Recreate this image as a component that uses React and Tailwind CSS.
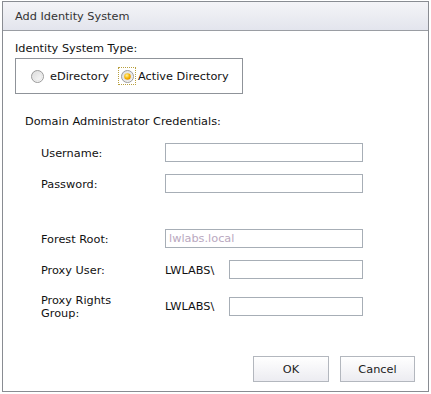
import React from "react";

function Radio({ checked }) {
  return (
    <svg width="13" height="13" viewBox="0 0 13 13" className="shrink-0">
      <defs>
        <linearGradient id={checked ? "rgc" : "rgu"} x1="0" y1="0" x2="1" y2="1">
          <stop offset="0" stopColor="#d8d8d8" />
          <stop offset="1" stopColor="#ffffff" />
        </linearGradient>
        <radialGradient id="dot" cx="0.4" cy="0.35" r="0.7">
          <stop offset="0" stopColor="#fff3a0" />
          <stop offset="0.6" stopColor="#f6b400" />
          <stop offset="1" stopColor="#e08a00" />
        </radialGradient>
      </defs>
      <circle cx="6.5" cy="6.5" r="6" fill={`url(#${checked ? "rgc" : "rgu"})`} stroke="#9a9a9a" strokeWidth="1" />
      <circle cx="6.5" cy="6.5" r="4.3" fill="none" stroke="#e6e6e6" strokeWidth="1" />
      {checked && <circle cx="6.5" cy="6.5" r="3.3" fill="url(#dot)" />}
    </svg>
  );
}

function Input({ className = "", placeholder }) {
  return (
    <div className={`h-[19px] border border-[#a7aeb6] bg-white flex items-center px-[3px] ${className}`}>
      {placeholder && <span className="text-[#b9a8c0] leading-[13px]">{placeholder}</span>}
    </div>
  );
}

export default function App() {
  return (
    <div className="w-[431px] h-[394px] bg-white pt-[1px] pl-[2px]" style={{ fontFamily: '"DejaVu Sans", Verdana, sans-serif' }}>
      <div className="w-[427px] h-[391px] border border-[#898c92] flex flex-col text-[11.3px] text-[#111] leading-[13px]">
        <div className="h-[29px] shrink-0 border-b border-[#9a9da3] bg-gradient-to-b from-[#f4f4f7] to-[#e3e5ed] flex items-center pl-[12px] pt-[1px] text-[#333]">
          Add Identity System
        </div>
        <div className="flex flex-col pl-[12px] pr-[13px] flex-1">
          <div className="mt-[11px]">Identity System Type:</div>
          <div className="mt-[3px] w-[228px] h-[36px] border border-[#8f9399] flex items-center pl-[15px]">
            <Radio checked={false} />
            <span className="ml-[6px]">eDirectory</span>
            <div className="ml-[9px] w-[18px] h-[18px] border border-dotted border-[#b8a040] flex items-center justify-center">
              <Radio checked />
            </div>
            <span className="ml-[2px]">Active Directory</span>
          </div>
          <div className="mt-[21px] pl-[10px]">Domain Administrator Credentials:</div>
          <div className="mt-[15px] pl-[26px] flex flex-col">
            <div className="flex items-center h-[19px]">
              <div className="w-[124px] pt-[1px]">Username:</div>
              <Input className="w-[198px]" />
            </div>
            <div className="flex items-center h-[19px] mt-[12px]">
              <div className="w-[124px] pt-[1px]">Password:</div>
              <Input className="w-[198px]" />
            </div>
            <div className="flex items-center h-[19px] mt-[36px]">
              <div className="w-[124px] pt-[1px]">Forest Root:</div>
              <Input className="w-[198px]" placeholder="lwlabs.local" />
            </div>
            <div className="flex items-center h-[19px] mt-[12px]">
              <div className="w-[124px] pt-[1px]">Proxy User:</div>
              <div className="w-[64px] pt-[1px]">LWLABS\</div>
              <Input className="w-[134px]" />
            </div>
            <div className="flex items-center h-[26px] mt-[14px]">
              <div className="w-[124px] pt-[2px]">Proxy Rights<br />Group:</div>
              <div className="w-[64px] pt-[1px]">LWLABS\</div>
              <Input className="w-[134px]" />
            </div>
          </div>
          <div className="mt-auto mb-[9px] flex justify-end gap-[11px]">
            <button className="w-[76px] h-[26px] border border-[#b3b7be] bg-gradient-to-b from-[#ffffff] to-[#ececf1] text-[#222]">OK</button>
            <button className="w-[75px] h-[26px] border border-[#b3b7be] bg-gradient-to-b from-[#ffffff] to-[#ececf1] text-[#222]">Cancel</button>
          </div>
        </div>
      </div>
    </div>
  );
}
